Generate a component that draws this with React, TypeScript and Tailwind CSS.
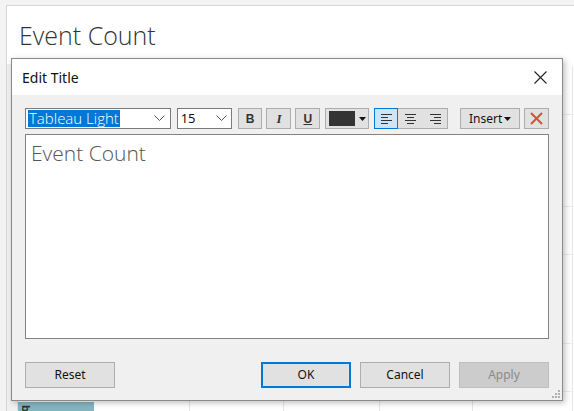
import React from "react";

const ui = { fontFamily: '"Noto Sans", "Open Sans", sans-serif' };
const tab = { fontFamily: '"Open Sans", "Lato", sans-serif' };

function Chevron() {
  return (
    <svg width="11" height="7" viewBox="0 0 11 7" className="shrink-0">
      <polyline points="0.5,0.5 5.5,5.5 10.5,0.5" fill="none" stroke="#555" strokeWidth="1" />
    </svg>
  );
}

function Tri() {
  return (
    <svg width="7" height="4" viewBox="0 0 7 4" className="shrink-0">
      <polygon points="0,0 7,0 3.5,4" fill="#111" />
    </svg>
  );
}

function AlignIcon({ kind }: { kind: "left" | "center" | "right" }) {
  const rows = [
    { w: 11, y: 1.5 },
    { w: 7, y: 4.5 },
    { w: 11, y: 7.5 },
    { w: 7, y: 10.5 },
  ];
  return (
    <svg width="11" height="12" viewBox="0 0 11 12">
      {rows.map((r, i) => {
        const x = kind === "left" ? 0 : kind === "right" ? 11 - r.w : (11 - r.w) / 2;
        return <line key={i} x1={x} x2={x + r.w} y1={r.y} y2={r.y} stroke="#333" strokeWidth="1" />;
      })}
    </svg>
  );
}

function FootButton({ label, kind }: { label: string; kind?: "primary" | "disabled" }) {
  const cls =
    kind === "primary"
      ? "border-2 border-[#0078d7] bg-[#e1e1e1] text-[#111]"
      : kind === "disabled"
      ? "border border-[#bfbfbf] bg-[#cccccc] text-[#8a8a8a]"
      : "border border-[#adadad] bg-[#e1e1e1] text-[#111]";
  return (
    <div className={`w-[90px] h-[26px] flex items-center justify-center text-[12px] ${cls}`} style={ui}>
      {label}
    </div>
  );
}

export default function App() {
  return (
    <div className="relative w-[574px] h-[411px] overflow-hidden bg-[#f3f3f3]">
      {/* background sheet */}
      <div className="absolute left-[6px] top-[5px] right-0 bottom-0 bg-white border-l border-t border-[#d6d6d6] flex flex-col">
        <div className="h-[58px] pl-[12px] pt-[14px]">
          <div className="text-[25px] leading-[30px] text-[#333] font-light" style={tab}>
            Event Count
          </div>
        </div>
        <div className="flex-1 flex">
          <div className="w-[11px] bg-[#f0f0f0] border-r border-[#e0e0e0]" />
          <div className="flex-1 relative">
            {/* faint grid lines */}
            <div className="absolute left-[171px] top-[320px] bottom-0 w-px bg-[#e6e6e6]" />
            <div className="absolute left-[265px] top-[320px] bottom-0 w-px bg-[#e6e6e6]" />
            <div className="absolute left-[361px] top-[320px] bottom-0 w-px bg-[#e6e6e6]" />
            <div className="absolute left-[454px] top-[320px] bottom-0 w-px bg-[#e6e6e6]" />
            <div className="absolute left-[554px] top-[2px] bottom-0 w-px bg-[#e6e6e6]" />
            <div className="absolute left-[540px] right-0 top-[50px] h-px bg-[#ececec]" />
            <div className="absolute left-[540px] right-0 top-[142px] h-px bg-[#ececec]" />
            <div className="absolute left-[540px] right-0 top-[190px] h-px bg-[#ececec]" />
            <div className="absolute left-[540px] right-0 top-[279px] h-px bg-[#ececec]" />
            <div className="absolute left-[540px] right-0 top-[327px] h-px bg-[#ececec]" />
            <div className="absolute left-0 top-[338px] w-[76px] h-[20px] bg-[#84b6c2] flex items-start pl-[5px] pt-[1px]">
              <span className="text-[11px] leading-none text-[#333] font-bold rotate-90" style={ui}>b</span>
            </div>
          </div>
        </div>
      </div>

      {/* dialog */}
      <div
        className="absolute left-[11px] top-[58px] w-[552px] h-[343px] border border-[#8a8a8a] bg-[#f0f0f0] flex flex-col shadow-[2px_2px_6px_rgba(0,0,0,0.25)]"
        style={ui}
      >
        <div className="h-[36px] bg-white flex items-center justify-between pl-[10px] pr-[15px]">
          <span className="text-[14px] text-[#111]">Edit Title</span>
          <svg width="13" height="13" viewBox="0 0 13 13">
            <line x1="0.5" y1="0.5" x2="12.5" y2="12.5" stroke="#222" strokeWidth="1.1" />
            <line x1="12.5" y1="0.5" x2="0.5" y2="12.5" stroke="#222" strokeWidth="1.1" />
          </svg>
        </div>

        <div className="flex-1 flex flex-col px-[13px] pt-[13px]">
          {/* toolbar */}
          <div className="flex items-center h-[21px]">
            <div className="w-[146px] h-[21px] bg-white border border-[#7a7a7a] flex items-center justify-between pl-[2px] pr-[5px]">
              <span className="bg-[#0078d7] text-white text-[15px] leading-[17px] px-[1px] font-light" style={tab}>
                Tableau Light
              </span>
              <Chevron />
            </div>
            <div className="ml-[6px] w-[55px] h-[21px] bg-white border border-[#7a7a7a] flex items-center justify-between pl-[3px] pr-[4px]">
              <span className="text-[13px] text-[#111]">15</span>
              <Chevron />
            </div>
            <div className="ml-[6px] w-[25px] h-[21px] bg-[#e1e1e1] border border-[#adadad] flex items-center justify-center text-[12px] font-bold text-[#333]" style={{ fontFamily: '"Liberation Sans", sans-serif' }}>
              B
            </div>
            <div className="ml-[4px] w-[25px] h-[21px] bg-[#e1e1e1] border border-[#adadad] flex items-center justify-center text-[13px] italic font-bold text-[#333]" style={{ fontFamily: '"Liberation Serif", serif' }}>
              I
            </div>
            <div className="ml-[4px] w-[25px] h-[21px] bg-[#e1e1e1] border border-[#adadad] flex items-center justify-center text-[12px] font-bold underline text-[#333]" style={{ fontFamily: '"Liberation Sans", sans-serif' }}>
              U
            </div>
            <div className="ml-[5px] w-[44px] h-[21px] bg-[#e1e1e1] border border-[#adadad] flex items-center pl-[3px] gap-[4px]">
              <div className="w-[26px] h-[15px] bg-[#333333]" />
              <Tri />
            </div>
            <div className="ml-[5px] h-[21px] flex border border-[#adadad] bg-[#e1e1e1]">
              <div className="w-[24px] -m-px h-[21px] border border-[#0078d7] bg-[#cce4f7] flex items-center justify-center">
                <AlignIcon kind="left" />
              </div>
              <div className="w-[25px] ml-px flex items-center justify-center">
                <AlignIcon kind="center" />
              </div>
              <div className="w-[24px] flex items-center justify-center">
                <AlignIcon kind="right" />
              </div>
            </div>
            <div className="ml-[12px] w-[60px] h-[21px] bg-[#e1e1e1] border border-[#adadad] flex items-center justify-center gap-[2px]">
              <span className="text-[12px] text-[#111] leading-none">Insert</span>
              <Tri />
            </div>
            <div className="ml-[4px] w-[25px] h-[21px] bg-[#e1e1e1] border border-[#adadad] flex items-center justify-center">
              <svg width="13" height="13" viewBox="0 0 13 13">
                <line x1="1" y1="1" x2="12" y2="12" stroke="#c8553a" strokeWidth="2" />
                <line x1="12" y1="1" x2="1" y2="12" stroke="#c8553a" strokeWidth="2" />
              </svg>
            </div>
          </div>

          {/* text area */}
          <div className="mt-[5px] h-[205px] bg-white border border-[#828282] px-[5px] pt-[5px]">
            <div className="text-[21px] leading-[26px] text-[#555] font-light" style={tab}>
              Event Count
            </div>
          </div>

          {/* footer */}
          <div className="mt-[23px] flex items-center">
            <FootButton label="Reset" />
            <div className="flex-1" />
            <FootButton label="OK" kind="primary" />
            <div className="w-[9px]" />
            <FootButton label="Cancel" />
            <div className="w-[9px]" />
            <FootButton label="Apply" kind="disabled" />
          </div>
        </div>

        {/* resize grip */}
        <svg className="absolute right-[2px] bottom-[2px]" width="9" height="9" viewBox="0 0 9 9">
          {[
            [7, 1], [4, 4], [7, 4], [1, 7], [4, 7], [7, 7],
          ].map(([x, y], i) => (
            <rect key={i} x={x} y={y} width="2" height="2" fill="#b0b0b0" />
          ))}
        </svg>
      </div>
    </div>
  );
}
